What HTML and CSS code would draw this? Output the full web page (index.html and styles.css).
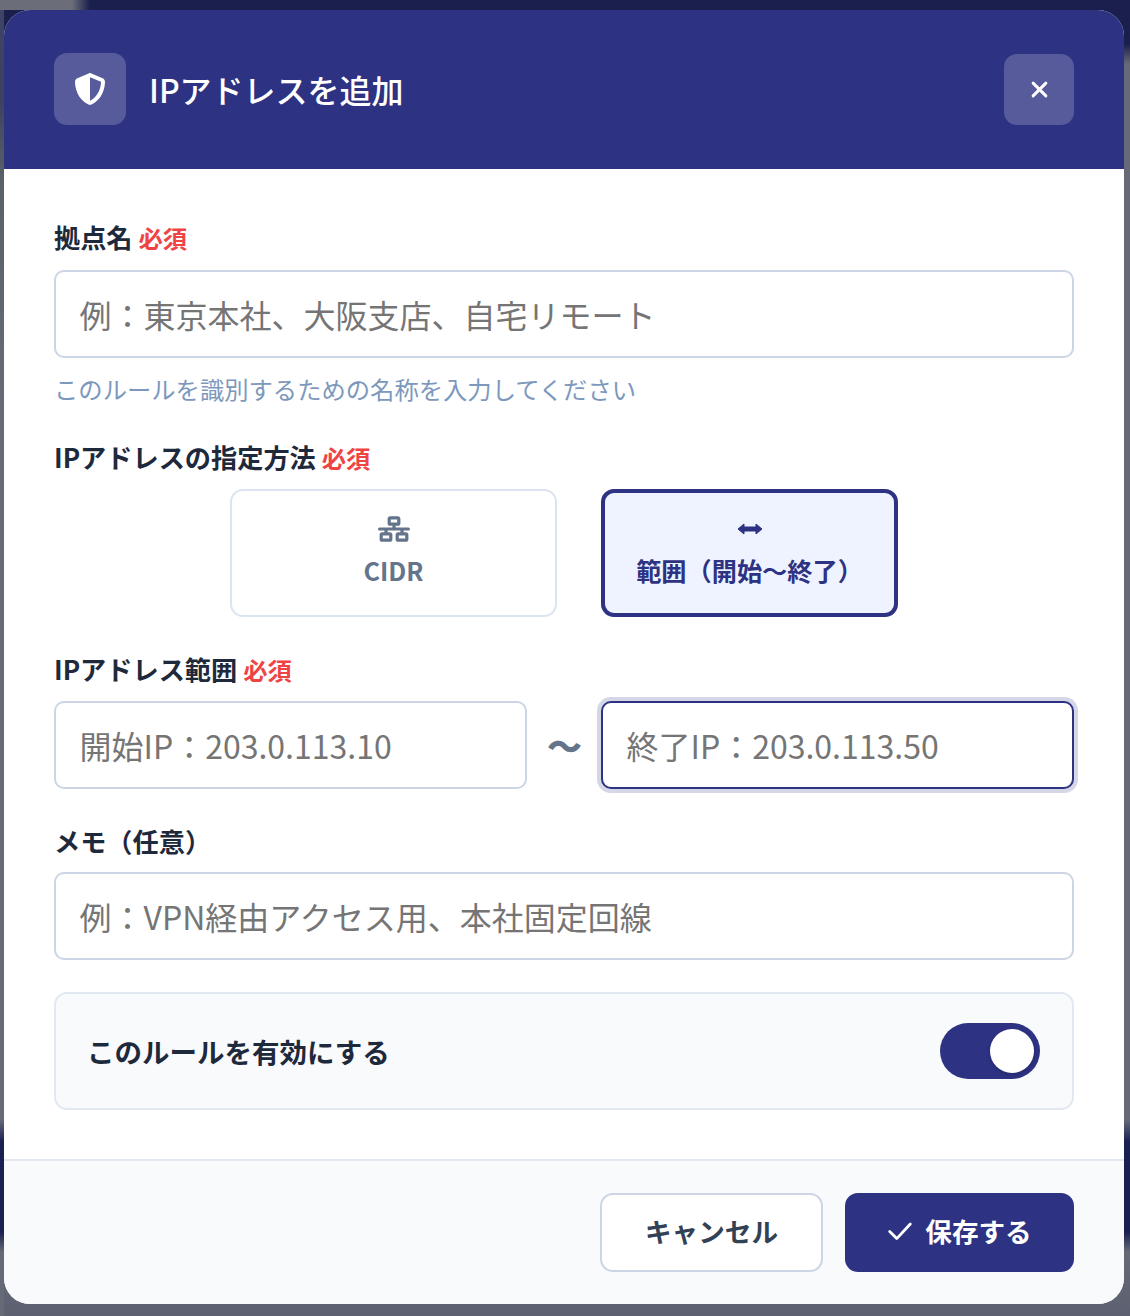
FILE: index.html
```html
<!DOCTYPE html>
<html lang="ja">
<head>
<meta charset="utf-8">
<title>IPアドレスを追加</title>
<link rel="stylesheet" href="styles.css">
</head>
<body>
<div class="modal">
  <header class="modal-head">
    <div class="head-left">
      <span class="head-icon">
        <svg class="shield" viewBox="0 0 512 512"><path fill="#fff" d="M256 0c4.6 0 9.2 1 13.4 2.9L457.7 82.8c22 9.3 38.4 31 38.3 57.2c-.5 99.2-41.3 280.7-213.6 363.2c-16.7 8-36.1 8-52.8 0C57.3 420.7 16.5 239.2 16 140c-.1-26.2 16.3-47.9 38.3-57.2L242.7 2.9C246.8 1 251.4 0 256 0zm0 66.8V444.8C394 378 431.1 230.1 432 141.4L256 66.8z"/></svg>
      </span>
      <h1 class="title">IPアドレスを追加</h1>
    </div>
    <button class="close" type="button" aria-label="閉じる">
      <svg class="close-x" viewBox="0 0 16 16"><path d="M2 2 14 14M14 2 2 14" stroke="#fff" stroke-width="2.8" stroke-linecap="round" fill="none"/></svg>
    </button>
  </header>

  <div class="modal-body">
    <div class="field f-name">
      <label class="label">拠点名 <span class="req">必須</span></label>
      <input class="input" type="text" placeholder="例：東京本社、大阪支店、自宅リモート">
      <p class="hint">このルールを識別するための名称を入力してください</p>
    </div>

    <div class="field f-method">
      <label class="label">IPアドレスの指定方法 <span class="req">必須</span></label>
      <div class="methods">
        <button class="method method-cidr" type="button">
          <svg class="ic-net" viewBox="0 0 640 512"><path fill="currentColor" d="M256 64H384v64H256V64zM240 0c-26.5 0-48 21.5-48 48v96c0 26.5 21.5 48 48 48h48v32H32c-17.7 0-32 14.3-32 32s14.3 32 32 32h96v32H80c-26.5 0-48 21.5-48 48v96c0 26.5 21.5 48 48 48H240c26.5 0 48-21.5 48-48V368c0-26.5-21.5-48-48-48H192V288H448v32H400c-26.5 0-48 21.5-48 48v96c0 26.5 21.5 48 48 48H560c26.5 0 48-21.5 48-48V368c0-26.5-21.5-48-48-48H512V288h96c17.7 0 32-14.3 32-32s-14.3-32-32-32H352V192h48c26.5 0 48-21.5 48-48V48c0-26.5-21.5-48-48-48H240zM96 448V384H224v64H96zm320-64H544v64H416V384z"/></svg>
          <span>CIDR</span>
        </button>
        <button class="method method-range is-active" type="button">
          <svg class="ic-arrows" viewBox="0 -6.5 26 26"><path fill="currentColor" stroke="currentColor" stroke-width="1" stroke-linejoin="round" d="M1 6.5 7 1.5V4.5H19V1.5L25 6.5 19 11.5V8.5H7V11.5Z"/></svg>
          <span>範囲（開始〜終了）</span>
        </button>
      </div>
    </div>

    <div class="field f-range">
      <label class="label">IPアドレス範囲 <span class="req">必須</span></label>
      <div class="range">
        <input class="input" type="text" placeholder="開始IP：203.0.113.10">
        <span class="tilde">〜</span>
        <input class="input is-focus" type="text" placeholder="終了IP：203.0.113.50">
      </div>
    </div>

    <div class="field f-memo">
      <label class="label">メモ（任意）</label>
      <input class="input" type="text" placeholder="例：VPN経由アクセス用、本社固定回線">
    </div>

    <div class="toggle-row">
      <span class="toggle-label">このルールを有効にする</span>
      <span class="toggle"><span class="knob"></span></span>
    </div>
  </div>

  <footer class="modal-foot">
    <button class="btn btn-cancel" type="button">キャンセル</button>
    <button class="btn btn-save" type="button">
      <svg class="ic-check" viewBox="0 0 24 24"><path d="M2.5 12.5 9 19 21.5 5.5" stroke="#fff" stroke-width="2.6" stroke-linecap="round" stroke-linejoin="round" fill="none"/></svg>
      <span>保存する</span>
    </button>
  </footer>
</div>
</body>
</html>
```

FILE: styles.css
```css
* { box-sizing: border-box; }
html, body { margin: 0; padding: 0; }
body {
  width: 1130px;
  height: 1316px;
  padding: 10px 6px 12px 4px;
  overflow: hidden;
  font-family: "Noto Sans CJK JP", "Noto Sans", sans-serif;
  background:
    linear-gradient(90deg, #6b6e78 0, #6b6e78 72px, rgba(107,110,120,0) 90px) 0 0 / 100% 10px no-repeat,
    linear-gradient(180deg, #3f4468 0, #3d4260 100px, #5a6268 180px, #666a76 400px, #666a76 1120px, #1a2050 1142px, #1a2050 1232px, #666a76 1252px, #666a76 1316px) 0 0 / 4px 100% no-repeat,
    linear-gradient(180deg, #1a1f4e 0, #1a1f4e 44px, #666a76 64px, #666a76 1120px, #1a2050 1142px, #1a2050 1232px, #666a76 1252px, #5c6070 1316px);
}
.modal {
  width: 1120px;
  height: 1294px;
  border-radius: 26px;
  overflow: hidden;
  background: #fff;
  display: flex;
  flex-direction: column;
}
.modal-head {
  height: 159px;
  flex: none;
  background: #2d3282;
  padding: 43px 50px 0;
  display: flex;
  align-items: flex-start;
  justify-content: space-between;
}
.head-left { display: flex; align-items: center; gap: 23px; }
.head-icon {
  width: 72px;
  height: 72px;
  border-radius: 13px;
  background: rgba(255,255,255,.2);
  display: flex;
  align-items: center;
  justify-content: center;
}
.shield { width: 32px; height: 32px; }
.title { margin: 0; font-size: 32px; font-weight: 500; color: #fff; line-height: 1.2; }
.close {
  width: 70px;
  height: 71px;
  margin-top: 1px;
  padding: 0;
  border: 0;
  border-radius: 13px;
  background: rgba(255,255,255,.2);
  display: flex;
  align-items: center;
  justify-content: center;
}
.close-x { width: 17px; height: 17px; }

.modal-body { flex: 1; padding: 51px 50px 0; display: flex; flex-direction: column; }
.field { display: flex; flex-direction: column; }
.label { font-size: 26.2px; font-weight: 700; color: #1e293b; line-height: 34px; height: 36px; margin-bottom: 14px; }
.req { font-size: 24.3px; color: #ef4444; }
.input {
  width: 100%;
  height: 88px;
  padding: 0 23.5px;
  border: 2px solid #cbd5e6;
  border-radius: 10px;
  background: #fff;
  font-family: inherit;
  font-size: 32px;
  color: #1e293b;
  outline: none;
}
.input::placeholder { color: #757575; opacity: 1; }
.hint { margin: 15px 0 0; font-size: 24.32px; line-height: 32px; color: #7d98bd; }

.f-method { margin-top: 35px; }
.f-method .label { margin-bottom: 13px; }
.methods { display: flex; justify-content: center; gap: 44px; }
.method {
  height: 128px;
  padding: 0 0 2px;
  border: 2px solid #dbe4f0;
  border-radius: 13px;
  background: #fff;
  color: #64748b;
  font-family: inherit;
  font-size: 25.2px;
  font-weight: 700;
  display: flex;
  flex-direction: column;
  align-items: center;
  justify-content: center;
  gap: 10px;
}
.method-cidr { width: 327px; }
.method-range { width: 297px; }
.is-active { border: 4px solid #2d3282; background: #eff2ff; color: #2d3282; }
.ic-net { width: 32px; height: 26px; }
.ic-arrows { width: 26px; height: 26px; }

.f-range { margin-top: 35px; }
.f-range .label { margin-bottom: 13px; }
.range { display: flex; align-items: center; gap: 20px; }
.tilde { flex: none; font-size: 35px; font-weight: 900; color: #64748b; width: 34px; text-align: center; padding-bottom: 2px; line-height: 1; }
.is-focus { border-color: #2d3282; box-shadow: 0 0 0 4px rgba(45,50,130,.2); }

.f-memo { margin-top: 35px; }
.f-memo .label { margin-bottom: 12px; }

.toggle-row {
  margin-top: 32px;
  height: 118px;
  padding: 0 32px 0 31px;
  border: 2px solid #e2e8f0;
  border-radius: 13px;
  background: #f8fafc;
  display: flex;
  align-items: center;
  justify-content: space-between;
}
.toggle-label { font-size: 27.5px; font-weight: 700; color: #1e293b; }
.toggle {
  width: 100px;
  height: 56px;
  border-radius: 28px;
  background: #2d3282;
  padding: 6px;
  display: flex;
  justify-content: flex-end;
}
.knob { width: 44px; height: 44px; border-radius: 50%; background: #fff; box-shadow: 0 2px 4px rgba(0,0,0,.15); }

.modal-foot {
  height: 145px;
  flex: none;
  border-top: 2px solid #e2e8f0;
  background: #f8fafc;
  padding: 32px 50px 0;
  display: flex;
  justify-content: flex-end;
  align-items: flex-start;
  gap: 22px;
}
.btn {
  height: 79px;
  padding: 0 0 4px;
  border-radius: 13px;
  font-family: inherit;
  font-size: 26.6px;
  font-weight: 700;
  display: flex;
  align-items: center;
  justify-content: center;
}
.btn-cancel { width: 223px; background: #fff; border: 2px solid #cbd5e6; color: #334155; }
.btn-save { width: 229px; background: #2d3282; border: 0; color: #fff; gap: 12px; }
.ic-check { width: 26px; height: 26px; }
```
